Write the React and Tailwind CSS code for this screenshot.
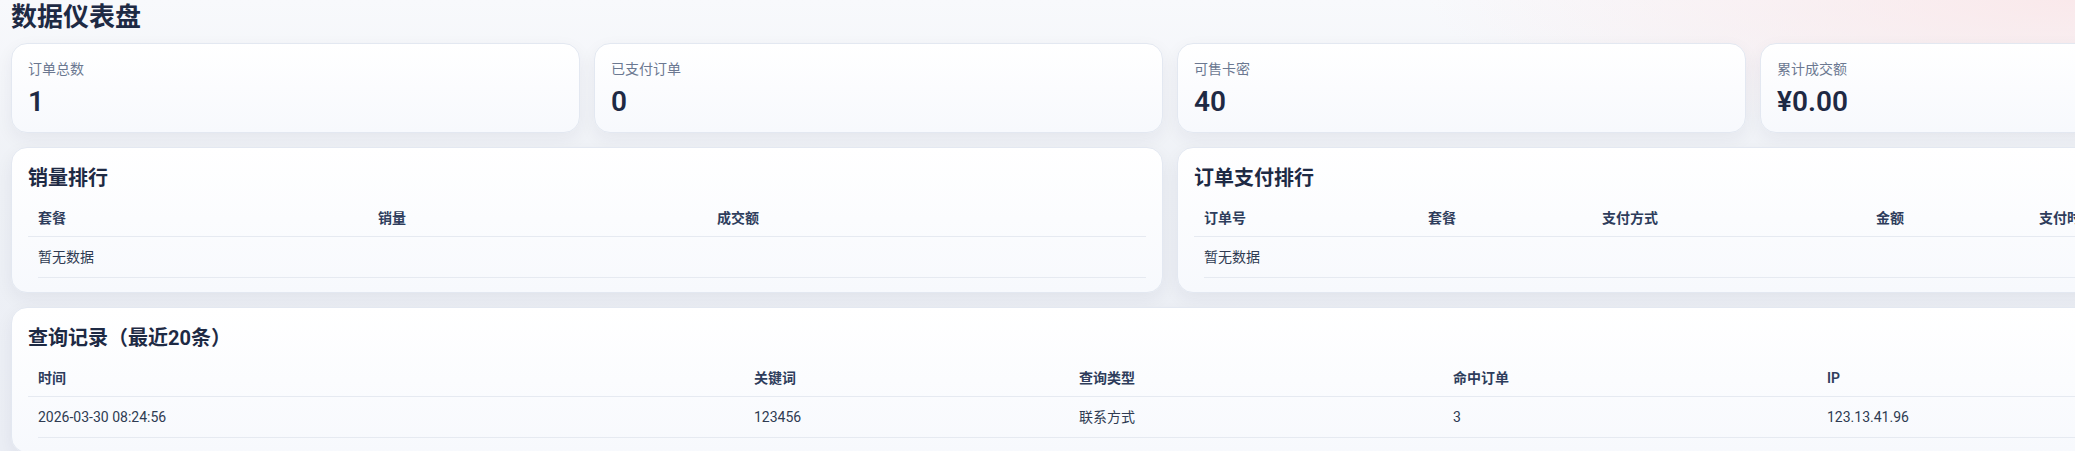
import React from "react";

const card =
  "rounded-[16px] border border-[#e3e8f1] bg-gradient-to-b from-white to-[#f7f9fd] shadow-[0_6px_18px_rgba(30,41,70,0.06)]";

function Stat({ label, value }) {
  return (
    <div className={`${card} px-[16px] pt-[15px] pb-[13px]`}>
      <div className="text-[14px] leading-[20px] text-[#6b7891]">{label}</div>
      <div className="mt-[6px] text-[28px] leading-[34px] font-semibold text-[#1e2a44]">{value}</div>
    </div>
  );
}

function SectionTitle({ children }) {
  return (
    <div className="mb-[4px] text-[20px] leading-[30px] font-bold text-[#1e2a44]">{children}</div>
  );
}

function Table({ cols, headers, rows, empty }) {
  const tpl = { gridTemplateColumns: cols.map((c) => (typeof c === "number" ? `${c}px` : c)).join(" ") };
  const bodyCols = cols
    .map((c, i) => (i === 0 && typeof c === "number" ? `${c - 10}px` : typeof c === "number" ? `${c}px` : c))
    .join(" ");
  return (
    <div className="text-[14px]">
      <div className="grid border-b border-[#e6eaf1]" style={tpl}>
        {headers.map((h) => (
          <div key={h} className="pl-[10px] pt-[13px] pb-[9px] leading-[17px] font-semibold text-[#2e3d5c] whitespace-nowrap">
            {h}
          </div>
        ))}
      </div>
      {empty ? (
        <div className="ml-[10px] border-b border-[#e6eaf1] py-[11px] leading-[18px] text-[#2f3b52]">暂无数据</div>
      ) : (
        rows.map((r, ri) => (
          <div key={ri} className="ml-[10px] grid border-b border-[#e6eaf1]" style={{ gridTemplateColumns: bodyCols }}>
            {r.map((c, i) => (
              <div key={i} className={`${i === 0 ? "" : "pl-[10px]"} py-[11px] leading-[18px] text-[#2f3b52] whitespace-nowrap`}>
                {c}
              </div>
            ))}
          </div>
        ))
      )}
    </div>
  );
}

export default function App() {
  return (
    <div
      className="w-[2075px] h-[451px] overflow-hidden bg-[radial-gradient(ellipse_at_100%_0%,rgba(250,230,232,0.85),transparent_22%),linear-gradient(180deg,#f8f9fc_0%,#eef1f6_40%,#ebeef5_100%)]"
      style={{ fontFamily: 'Roboto, "Noto Sans CJK SC", sans-serif' }}
    >
      <div className="w-[2340px] pl-[11px]">
        <h1 className="w-fit text-[26px] leading-[34px] font-bold text-[#1e2a44] mb-[9px]">数据仪表盘</h1>
        <div className="grid grid-cols-[569px_569px_569px_569px] gap-[14px]">
          <Stat label="订单总数" value="1" />
          <Stat label="已支付订单" value="0" />
          <Stat label="可售卡密" value="40" />
          <Stat label="累计成交额" value="¥0.00" />

          <div className={`${card} col-span-2 px-[16px] pt-[15px] pb-[14px]`}>
            <SectionTitle>销量排行</SectionTitle>
            <Table cols={[340, 339, "1fr"]} headers={["套餐", "销量", "成交额"]} empty />
          </div>
          <div className={`${card} col-span-2 px-[16px] pt-[15px] pb-[14px]`}>
            <SectionTitle>订单支付排行</SectionTitle>
            <Table
              cols={[224, 174, 274, 163, "1fr"]}
              headers={["订单号", "套餐", "支付方式", "金额", "支付时间"]}
              empty
            />
          </div>

          <div className={`${card} col-span-4 px-[16px] pt-[15px] pb-[14px]`}>
            <SectionTitle>查询记录（最近20条）</SectionTitle>
            <Table
              cols={[716, 325, 374, 374, "1fr"]}
              headers={["时间", "关键词", "查询类型", "命中订单", "IP"]}
              rows={[["2026-03-30 08:24:56", "123456", "联系方式", "3", "123.13.41.96"]]}
            />
          </div>
        </div>
      </div>
    </div>
  );
}
